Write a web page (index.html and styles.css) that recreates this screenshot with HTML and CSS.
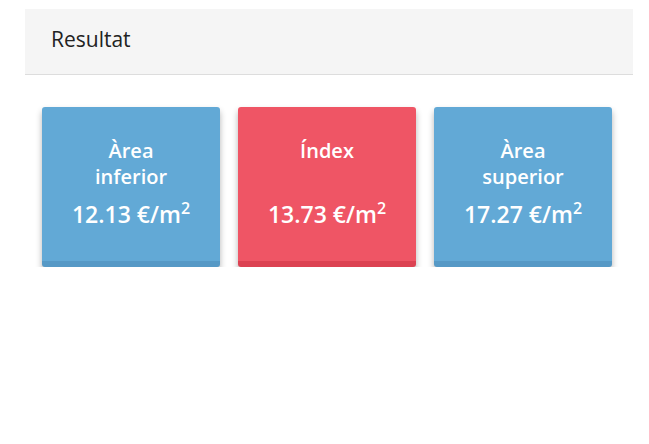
FILE: index.html
```html
<!DOCTYPE html>
<html lang="ca">
<head>
    <meta charset="UTF-8">
    <meta name="viewport" content="width=device-width, initial-scale=1.0">
    <title>Resultat</title>
    <link rel="stylesheet" href="styles.css">
</head>
<body>

    <div class="panel">
        <div class="panel-heading">Resultat</div>

        <div class="panel-body">
            <div class="box area">
                <div class="box-title">Àrea inferior</div>
                <div class="box-value">12.13 €/m<sup>2</sup></div>
            </div>
            <div class="box index">
                <div class="box-title">Índex</div>
                <div class="box-value">13.73 €/m<sup>2</sup></div>
            </div>
            <div class="box area">
                <div class="box-title">Àrea superior</div>
                <div class="box-value">17.27 €/m<sup>2</sup></div>
            </div>
        </div>
    </div>

</body>
</html>
```

FILE: styles.css
```css
body {
    font-family: "Open Sans", "Noto Sans", sans-serif;
    background-color: #fff;
    color: #222;
    margin: 0;
}

.panel {
    margin: 9px 16px 0 25px;
}

.panel-heading {
    background-color: #f5f5f5;
    border-bottom: 1px solid #ddd;
    height: 65px;
    line-height: 61px;
    padding: 0 26px;
    font-size: 21px;
}

.panel-body {
    display: flex;
    gap: 18px;
    padding: 32px 21px 0 17px;
}

.box {
    flex: 1;
    box-sizing: border-box;
    height: 160px;
    padding: 31px 30px 0;
    border-radius: 3px;
    border-bottom: 6px solid;
    box-shadow: 0 4px 6px rgba(0, 0, 0, 0.3);
    color: #fff;
    text-align: center;
}

.box.area {
    background-color: #62a9d6;
    border-bottom-color: #5699c6;
}

.box.index {
    background-color: #ef5565;
    border-bottom-color: #dc4252;
}

.box-title {
    min-height: 52px;
    font-size: 20px;
    font-weight: 600;
    line-height: 26px;
}

.box-value {
    margin-top: 9px;
    margin-left: -20px;
    margin-right: -20px;
    font-size: 23px;
    font-weight: 600;
    line-height: 30px;
}

.box-value sup {
    font-size: 16px;
    line-height: 0;
    vertical-align: 9px;
}
```
